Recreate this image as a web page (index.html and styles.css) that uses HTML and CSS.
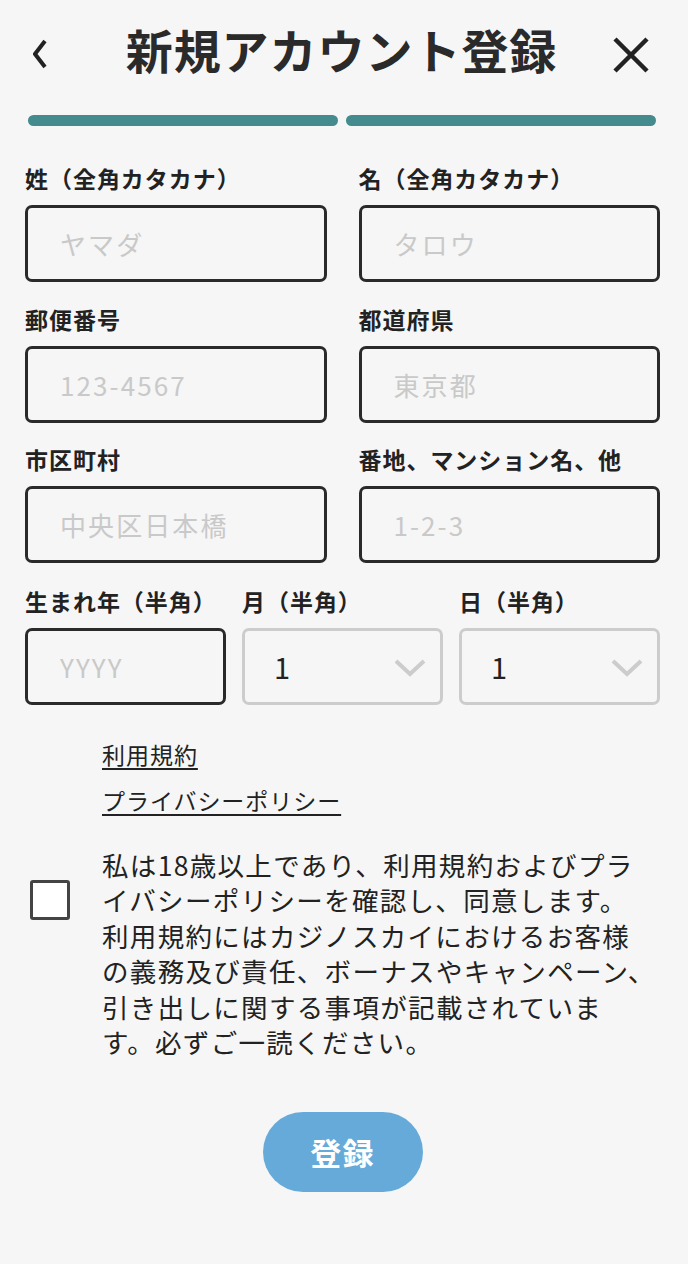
FILE: index.html
```html
<!DOCTYPE html>
<html lang="ja">
<head>
    <meta charset="UTF-8">
    <meta name="viewport" content="width=device-width, initial-scale=1.0">
    <title>新規アカウント登録</title>
    <link rel="stylesheet" href="styles.css">
</head>
<body>
    <div class="container">
        <div class="header">
            <button type="button" class="icon-btn back-btn" aria-label="戻る">
                <svg width="14" height="30" viewBox="0 0 14 30"><polyline points="12,2 2,15 12,28" fill="none" stroke="#222" stroke-width="4"/></svg>
            </button>
            <h1>新規アカウント登録</h1>
            <button type="button" class="icon-btn close-btn" aria-label="閉じる">
                <svg width="38" height="38" viewBox="0 0 38 38"><path d="M3 3 L35 35 M35 3 L3 35" fill="none" stroke="#222" stroke-width="4.5"/></svg>
            </button>
        </div>

        <div class="progress">
            <span class="step done"></span>
            <span class="step done"></span>
        </div>

        <form action="/register" method="POST">
            <div class="form-grid">
                <div class="field">
                    <label>姓（全角カタカナ）</label>
                    <input type="text" name="last_name" placeholder="ヤマダ">
                </div>
                <div class="field">
                    <label>名（全角カタカナ）</label>
                    <input type="text" name="first_name" placeholder="タロウ">
                </div>
                <div class="field">
                    <label>郵便番号</label>
                    <input type="text" name="zip" placeholder="123-4567">
                </div>
                <div class="field">
                    <label>都道府県</label>
                    <input type="text" name="pref" placeholder="東京都">
                </div>
                <div class="field">
                    <label>市区町村</label>
                    <input type="text" name="city" placeholder="中央区日本橋">
                </div>
                <div class="field">
                    <label>番地、マンション名、他</label>
                    <input type="text" name="street" placeholder="1-2-3">
                </div>
            </div>

            <div class="birth-grid">
                <div class="field">
                    <label>生まれ年（半角）</label>
                    <input type="text" name="year" placeholder="YYYY">
                </div>
                <div class="field">
                    <label>月（半角）</label>
                    <div class="select-wrap">
                        <select name="month">
                            <option>1</option>
                            <option>2</option>
                            <option>3</option>
                        </select>
                        <svg class="chevron" width="32" height="18" viewBox="0 0 32 18"><polyline points="2,2 16,15 30,2" fill="none" stroke="#cccccc" stroke-width="4"/></svg>
                    </div>
                </div>
                <div class="field">
                    <label>日（半角）</label>
                    <div class="select-wrap">
                        <select name="day">
                            <option>1</option>
                            <option>2</option>
                            <option>3</option>
                        </select>
                        <svg class="chevron" width="32" height="18" viewBox="0 0 32 18"><polyline points="2,2 16,15 30,2" fill="none" stroke="#cccccc" stroke-width="4"/></svg>
                    </div>
                </div>
            </div>

            <div class="terms">
                <a href="#" class="terms-link">利用規約</a>
                <a href="#" class="terms-link">プライバシーポリシー</a>
            </div>

            <div class="agree">
                <input type="checkbox" name="agree" class="agree-check">
                <p>私は18歳以上であり、利用規約およびプラ<br>イバシーポリシーを確認し、同意します。<br>利用規約にはカジノスカイにおけるお客様<br>の義務及び責任、ボーナスやキャンペーン、<br>引き出しに関する事項が記載されていま<br>す。必ずご一読ください。</p>
            </div>

            <div class="buttons">
                <button type="submit" class="submit-btn">登録</button>
            </div>
        </form>
    </div>
</body>
</html>
```

FILE: styles.css
```css
* {
    margin: 0;
    padding: 0;
    box-sizing: border-box;
}

body {
    font-family: "Noto Sans CJK JP", "Noto Sans", sans-serif;
    background-color: #f6f6f6;
    color: #222;
    letter-spacing: 0.06em;
}

.container {
    width: 688px;
    padding: 0 28px 40px 25px;
}

.header {
    height: 104px;
    display: flex;
    align-items: center;
    justify-content: space-between;
}

.icon-btn {
    background: none;
    border: none;
    cursor: pointer;
    display: flex;
    align-items: center;
}

.back-btn {
    margin-left: 8px;
    margin-top: 4px;
}

.close-btn {
    margin-right: 10px;
    margin-top: 6px;
}

h1 {
    font-size: 47px;
    font-weight: bold;
    line-height: 1;
    color: #2a2a2a;
    margin-left: 24px;
    margin-bottom: 8px;
}

.progress {
    display: flex;
    gap: 8px;
    margin: 11px 4px 39px 3px;
}

.step {
    flex: 1;
    height: 11px;
    border-radius: 6px;
    background-color: #ddd;
}

.step.done {
    background-color: #448b8e;
}

.form-grid {
    display: grid;
    grid-template-columns: 1fr 1fr;
    column-gap: 32px;
    row-gap: 23.5px;
}

.birth-grid {
    display: grid;
    grid-template-columns: 1fr 1fr 1fr;
    column-gap: 16px;
    margin-top: 24.5px;
}

.field label {
    display: block;
    font-size: 23px;
    font-weight: bold;
    line-height: 30px;
    margin-bottom: 10px;
    margin-top: -2px;
    padding-bottom: 2px;
    white-space: nowrap;
}

.field input,
.field select {
    width: 100%;
    height: 77px;
    border: 3px solid #2a2a2a;
    border-radius: 7px;
    background-color: transparent;
    padding-left: 32px;
    font-family: inherit;
    font-size: 26px;
    letter-spacing: 0.08em;
    color: #222;
    outline: none;
}

.field input::placeholder {
    color: #c9c9c9;
}

.select-wrap {
    position: relative;
}

.field select {
    appearance: none;
    -webkit-appearance: none;
    border-color: #cccccc;
    font-size: 29px;
    padding-left: 29px;
}

.chevron {
    position: absolute;
    right: 17px;
    top: 31px;
    pointer-events: none;
}

.terms {
    padding-left: 77px;
    margin-top: 34px;
    display: flex;
    flex-direction: column;
    align-items: flex-start;
    gap: 16px;
}

.terms-link {
    color: #222;
    font-size: 23px;
    line-height: 30px;
    text-decoration: underline;
    text-decoration-thickness: 2px;
    text-underline-offset: 4px;
}

.agree {
    display: flex;
    align-items: flex-start;
    gap: 32px;
    margin-top: 32px;
    padding-left: 5px;
}

.agree-check {
    appearance: none;
    -webkit-appearance: none;
    flex-shrink: 0;
    width: 40px;
    height: 40px;
    margin-top: 33px;
    background-color: white;
    border: 3px solid #444;
    border-radius: 3px;
}

.agree p {
    font-size: 26.5px;
    line-height: 35.5px;
    letter-spacing: 0.05em;
    white-space: nowrap;
}

.buttons {
    display: flex;
    justify-content: center;
    margin-top: 52px;
}

.submit-btn {
    width: 160px;
    height: 80px;
    border: none;
    border-radius: 40px;
    background-color: #66aad9;
    color: white;
    font-family: inherit;
    font-size: 31px;
    font-weight: bold;
    letter-spacing: 0.04em;
    cursor: pointer;
}
```
